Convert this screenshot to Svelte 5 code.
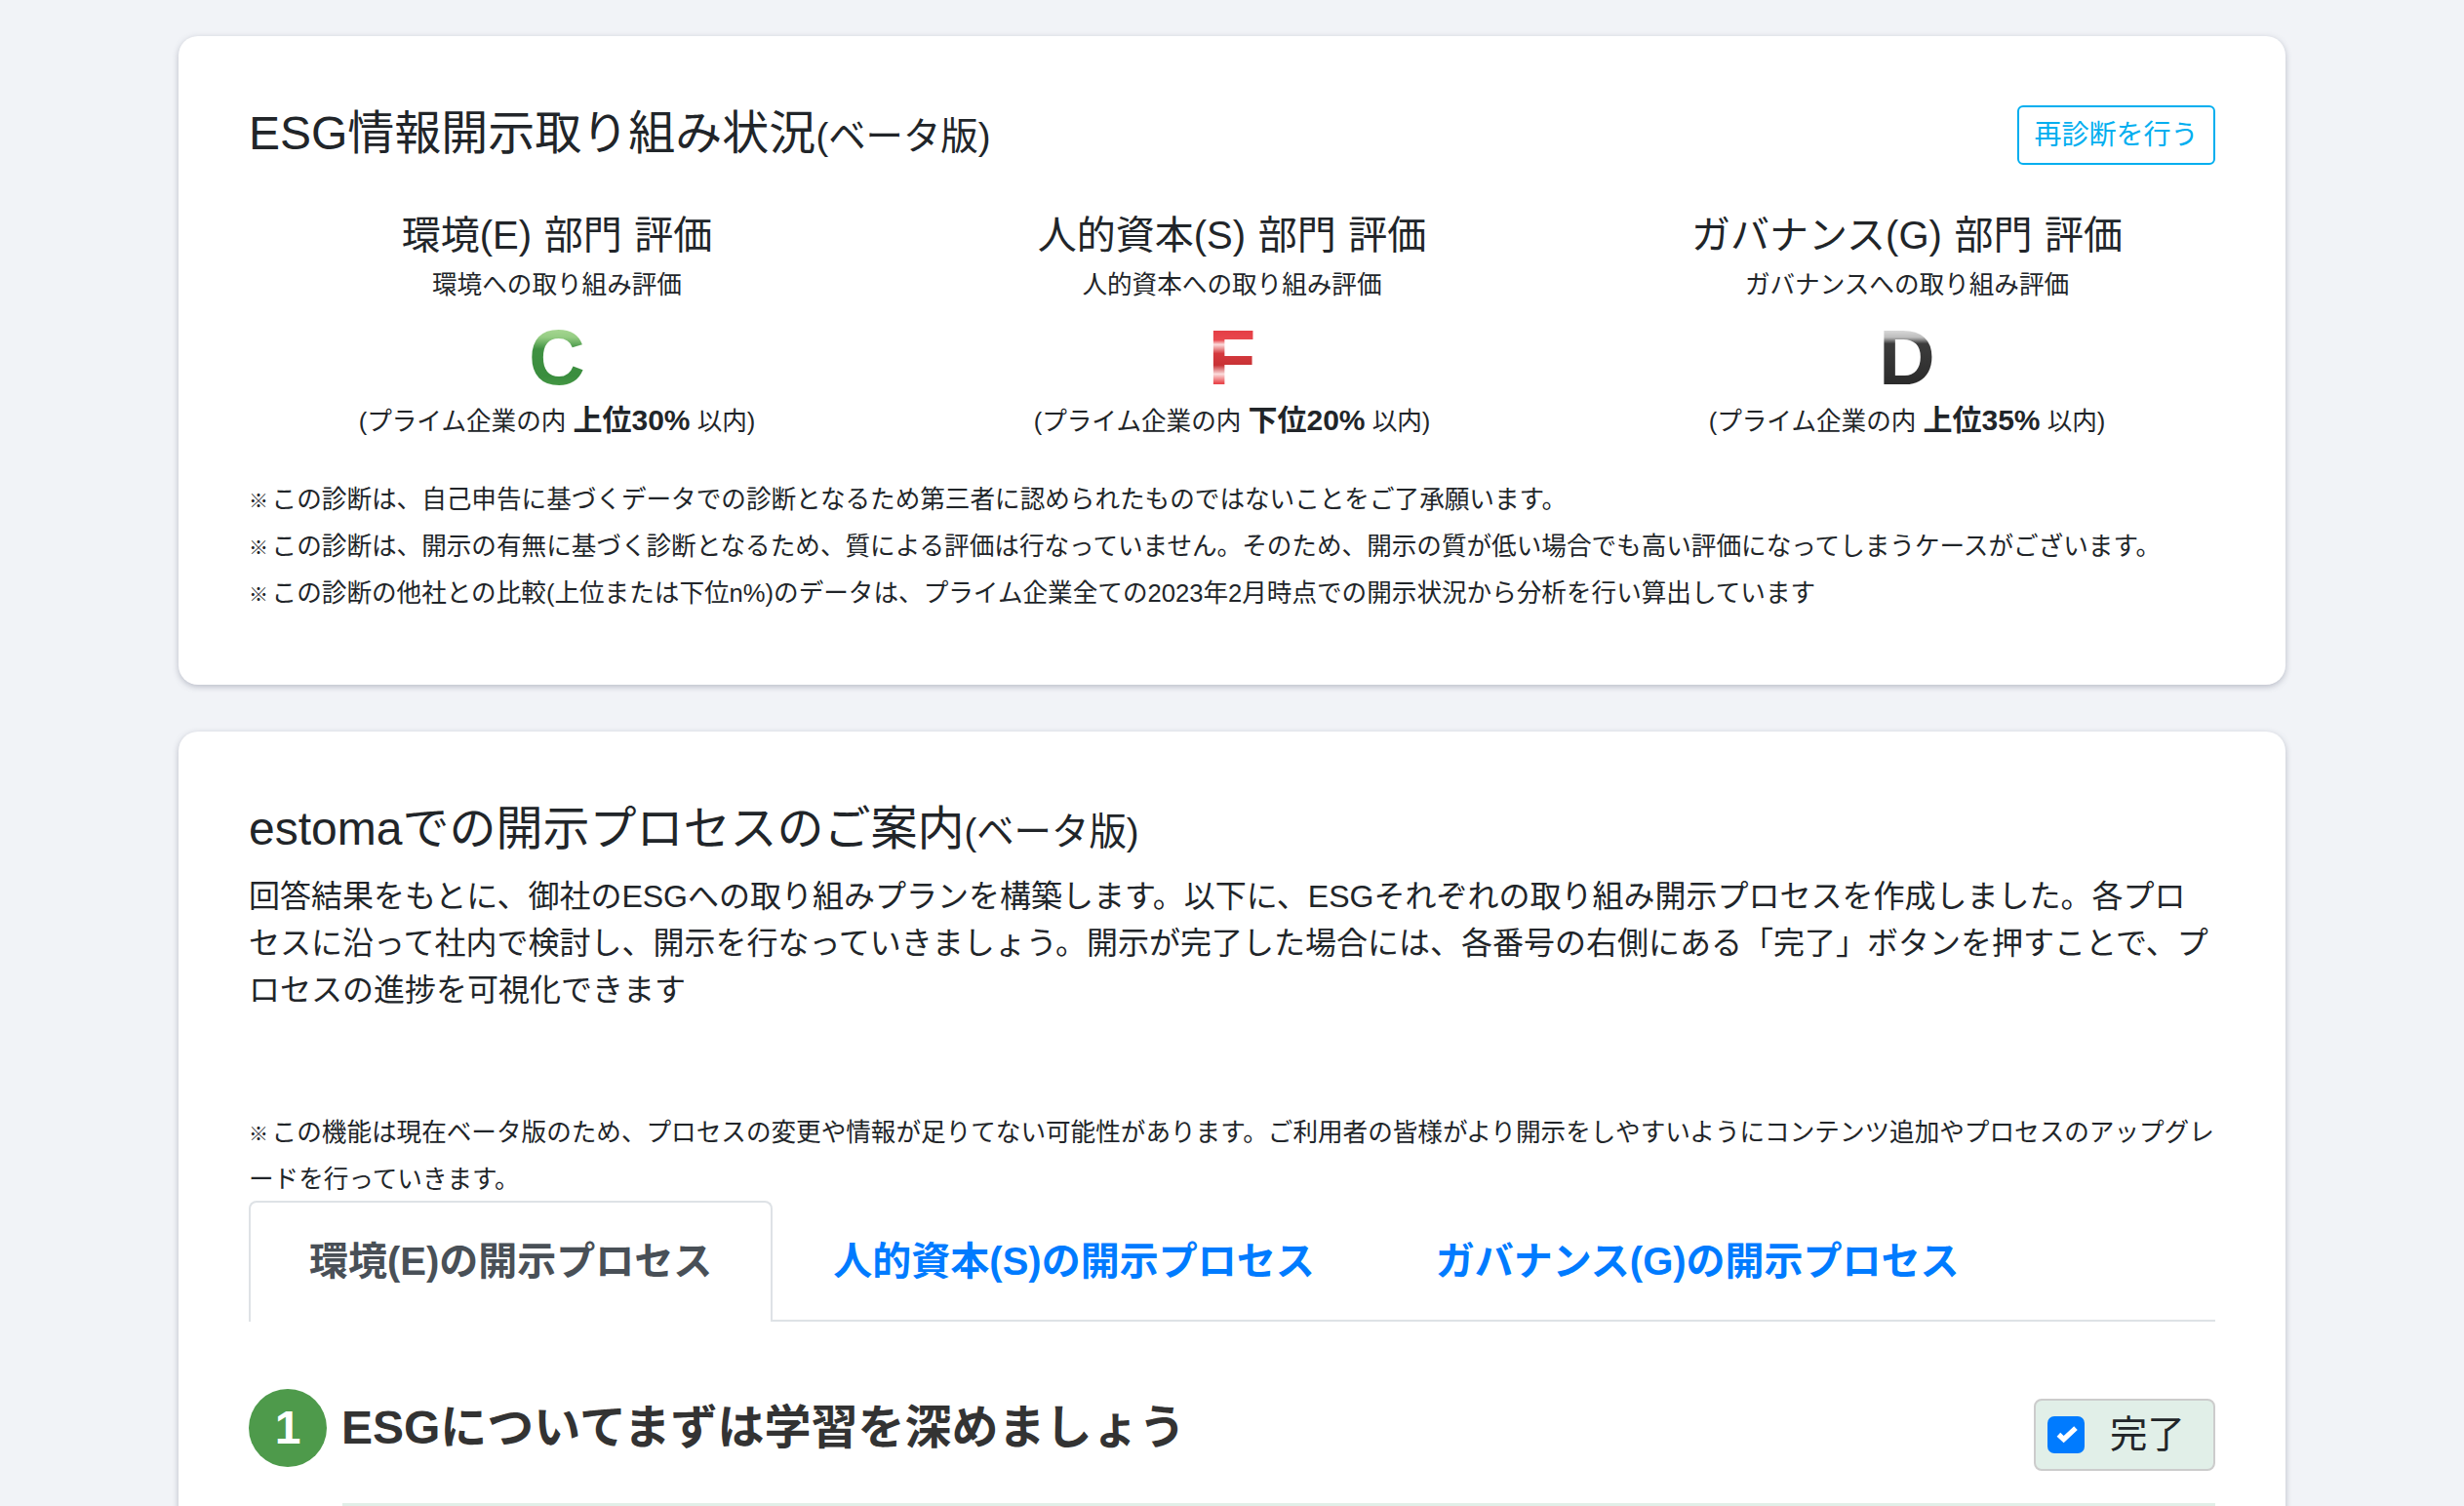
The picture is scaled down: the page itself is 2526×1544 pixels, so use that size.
<script>
  const cols = [
    { head: '環境(E) 部門 評価', sub: '環境への取り組み評価', grade: 'C', cls: 'c', rank: '上位30%' },
    { head: '人的資本(S) 部門 評価', sub: '人的資本への取り組み評価', grade: 'F', cls: 'f', rank: '下位20%' },
    { head: 'ガバナンス(G) 部門 評価', sub: 'ガバナンスへの取り組み評価', grade: 'D', cls: 'd', rank: '上位35%' }
  ];
  const notes = [
    'この診断は、自己申告に基づくデータでの診断となるため第三者に認められたものではないことをご了承願います。',
    'この診断は、開示の有無に基づく診断となるため、質による評価は行なっていません。そのため、開示の質が低い場合でも高い評価になってしまうケースがございます。',
    'この診断の他社との比較(上位または下位n%)のデータは、プライム企業全ての2023年2月時点での開示状況から分析を行い算出しています'
  ];
</script>

<main class="page">
  <section class="card first">
    <div class="title-row">
      <h2 class="title">ESG情報開示取り組み状況<small>(ベータ版)</small></h2>
      <button class="again">再診断を行う</button>
    </div>
    <div class="cols">
      {#each cols as col}
        <div class="col">
          <h3 class="head">{col.head}</h3>
          <p class="sub">{col.sub}</p>
          <div class="grade {col.cls}">{col.grade}</div>
          <p class="rank">(プライム企業の内 <b>{col.rank}</b> 以内)</p>
        </div>
      {/each}
    </div>
    <div class="notes">
      {#each notes as n}
        <p class="note"><span class="mark">※</span> {n}</p>
      {/each}
    </div>
  </section>

  <section class="card second">
    <h2 class="title">estomaでの開示プロセスのご案内<small>(ベータ版)</small></h2>
    <p class="lead">回答結果をもとに、御社のESGへの取り組みプランを構築します。以下に、ESGそれぞれの取り組み開示プロセスを作成しました。各プロセスに沿って社内で検討し、開示を行なっていきましょう。開示が完了した場合には、各番号の右側にある「完了」ボタンを押すことで、プロセスの進捗を可視化できます</p>
    <p class="note beta"><span class="mark">※</span> この機能は現在ベータ版のため、プロセスの変更や情報が足りてない可能性があります。ご利用者の皆様がより開示をしやすいようにコンテンツ追加やプロセスのアップグレードを行っていきます。</p>
    <nav class="tabs">
      <span class="tab active">環境(E)の開示プロセス</span>
      <span class="tab">人的資本(S)の開示プロセス</span>
      <span class="tab">ガバナンス(G)の開示プロセス</span>
    </nav>
    <div class="step">
      <span class="num">1</span>
      <h3 class="step-title">ESGについてまずは学習を深めましょう</h3>
      <label class="done">
        <span class="check">
          <svg viewBox="0 0 16 16" width="38" height="38"><path d="M4.8 7.9 7 10 12.2 5.1" fill="none" stroke="#fff" stroke-width="2.2"/></svg>
        </span>
        <span class="done-text">完了</span>
      </label>
    </div>
    <div class="strip"></div>
  </section>
</main>

<style>
  :global(html), :global(body) {
    margin: 0;
    height: 100%;
    overflow: hidden;
    background: #f1f3f7;
  }
  .page {
    font-family: "Liberation Sans", "Noto Sans CJK JP", sans-serif;
    font-size: 32px;
    line-height: 1.5;
    color: #212529;
    height: 1544px;
    overflow: hidden;
    padding-top: 37px;
    box-sizing: border-box;
  }
  .card {
    width: 2160px;
    margin: 0 auto 48px;
    box-sizing: border-box;
    padding: 0 72px;
    background: #fff;
    border-radius: 20px;
    box-shadow: 0 2px 6px rgba(80, 85, 110, 0.35);
  }
  .first { height: 665px; padding-top: 64px; }
  .second { height: 900px; padding-top: 64px; }
  .title-row {
    display: flex;
    justify-content: space-between;
    align-items: flex-start;
  }
  h2, h3, p { margin: 0; font-weight: 400; }
  .title { font-size: 48px; line-height: 72px; }
  .title small { font-size: 38.4px; }
  .again {
    margin-top: 7px;
    width: 203px;
    height: 61px;
    padding: 0;
    font: inherit;
    font-size: 28px;
    color: #00aeef;
    background: #fff;
    border: 2px solid #00aeef;
    border-radius: 6px;
  }
  .cols {
    display: grid;
    grid-template-columns: repeat(3, 1fr);
    margin: 35px -30px 0;
    text-align: center;
  }
  .head { font-size: 40px; line-height: 60px; word-spacing: 1.5px; }
  .sub { font-size: 25.6px; line-height: 38px; margin-top: 2px; }
  .grade {
    font-size: 80px;
    font-weight: 700;
    line-height: 92px;
    width: fit-content;
    margin: 10px auto 0;
    color: transparent;
    background-clip: text;
    -webkit-background-clip: text;
  }
  .c { background-image: linear-gradient(180deg, #a2d48e 20%, #94cc82 27%, #3f9142 40%, #3a8d3e 70%, #459844 82%); }
  .d { background-image: linear-gradient(180deg, #d6d6d6 20%, #bdbdbd 27%, #3c3c3c 34%, #2b2b2b 80%); }
  .f { background-image: linear-gradient(180deg, #e53f46 20%, #e8484e 30%, #fbdcdc 35%, #d53a3e 45%, #c83235 58%, #fbdcdc 68%, #e9484d 78%); }
  .rank { font-size: 25.6px; line-height: 38px; margin-top: 0; }
  .rank b { font-size: 30px; line-height: 1; }
  .notes { margin-top: 37px; }
  .note {
    font-size: 25.6px;
    line-height: 48px;
    line-break: loose;
  }
  .mark { font-size: 20px; font-weight: 700; line-height: 1; margin-right: -3.5px; }
  .lead { line-height: 48px; line-break: loose; margin-top: 6px; }
  .beta { margin-top: 98px; }
  .tabs {
    display: flex;
    height: 122px;
    margin-top: -2px;
    border-bottom: 2px solid #dee2e6;
    font-size: 40px;
    font-weight: 700;
    color: #007bff;
  }
  .tab {
    padding: 30px 60px 0;
    box-sizing: border-box;
    height: 124px;
    border: 2px solid transparent;
    border-bottom: 0;
  }
  .active {
    color: #495057;
    background: #fff;
    border-color: #dee2e6;
    border-radius: 8px 8px 0 0;
  }
  .step {
    display: flex;
    align-items: center;
    margin-top: 69px;
    height: 80px;
  }
  .num {
    flex: none;
    width: 80px;
    height: 80px;
    border-radius: 50%;
    background: #4e9a4b;
    color: #fff;
    font-size: 48px;
    font-weight: 700;
    line-height: 80px;
    text-align: center;
  }
  .step-title {
    flex: 1;
    margin-left: 15px;
    font-size: 48px;
    font-weight: 700;
    color: #333;
  }
  .done {
    display: flex;
    align-items: center;
    box-sizing: border-box;
    width: 186px;
    height: 74px;
    margin-top: 14px;
    padding-left: 12px;
    background: #e1efe8;
    border: 2px solid #ccc;
    border-radius: 8px;
  }
  .check {
    width: 38px;
    height: 38px;
    border-radius: 7px;
    background: #007bff;
    display: block;
  }
  .check svg { display: block; }
  .done-text { margin-left: 26px; font-size: 38.4px; }
  .strip {
    height: 20px;
    margin: 37px 0 0 96px;
    background: #e1efe8;
  }
</style>
